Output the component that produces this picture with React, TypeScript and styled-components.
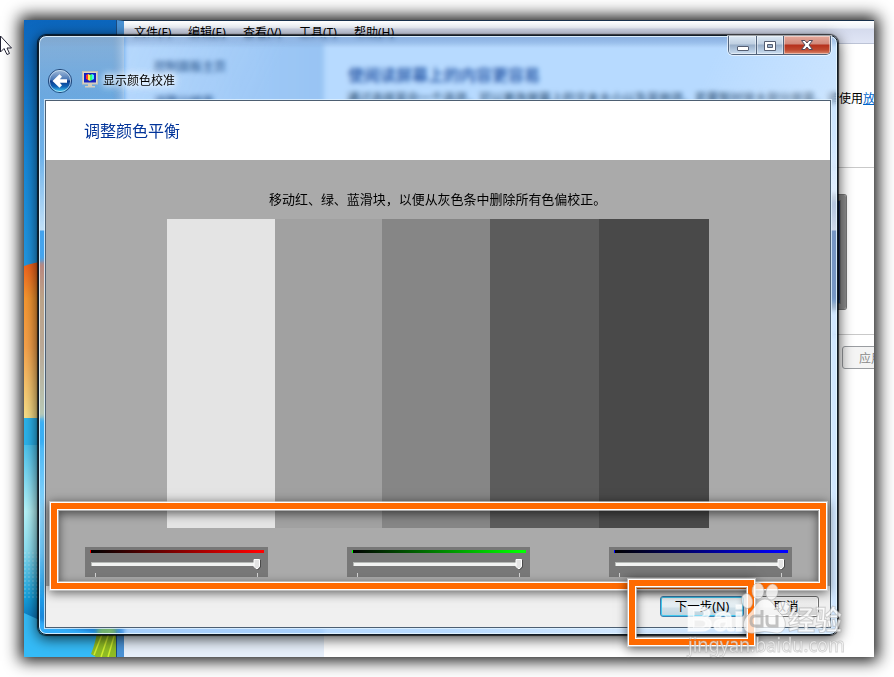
import React from "react";
import styled, { createGlobalStyle } from "styled-components";

const GlobalStyle = createGlobalStyle`
  *, *::before, *::after { box-sizing: border-box; }
  body {
    margin: 0;
    background: #fff;
    font-family: "Noto Sans", "Noto Sans CJK SC", sans-serif;
    font-size: 12px;
    color: #000;
  }
`;

const Page = styled.main`
  position: relative;
  width: 894px;
  height: 677px;
  padding: 20px 20px 20px 24px;
  overflow: hidden;
  background: #fff;
`;

const Desktop = styled.section`
  position: relative;
  display: flex;
  width: 850px;
  height: 637px;
  overflow: hidden;
  background: #1a86d4;
`;

const DesktopShadow = styled.div`
  width: 850px;
  height: 637px;
  box-shadow: 0 0 15px 4px rgba(0, 0, 0, 0.92);
`;

const Wallpaper = styled.svg`
  flex: none;
  width: 93px;
  height: 637px;
`;

const Explorer = styled.div`
  flex: none;
  display: flex;
  flex-direction: column;
  width: 757px;
  border-top: 1px solid #17304c;
  border-left: 7px solid #4a92d5;
  background: #fff;
  box-shadow: inset 1px 0 #132c48, -1px 0 #1d4c80;
`;

const MenuBar = styled.nav`
  display: flex;
  flex: none;
  height: 23px;
  padding: 3px 0 0 10px;
  border-bottom: 1px solid #bcc3d6;
  background: linear-gradient(#fff 0, #edf1f8 7px, #d5dbed 8px, #e1e6f6 23px);
  line-height: 18px;
`;

const MenuItem = styled.span<{ $width: number }>`
  flex: none;
  width: ${(p) => p.$width}px;
  white-space: nowrap;
`;

const ExplorerBody = styled.div`
  display: flex;
  flex: 1;
`;

const SidePane = styled.aside`
  flex: none;
  display: flex;
  flex-direction: column;
  gap: 17px;
  width: 200px;
  padding: 14px 0 0 30px;
  background: linear-gradient(90deg, #e9f1fb, #d0dded 200px) top / 200px 100px no-repeat, #e6effa;
  line-height: 18px;
  font-weight: 500;
  color: #1b2f50;
`;

const ExplorerContent = styled.div`
  flex: none;
  width: 560px;
  padding: 20px 0 0 24px;
  white-space: nowrap;
`;

const ExplorerTitle = styled.h2`
  margin: 0;
  font-size: 16px;
  font-weight: 500;
  line-height: 22px;
  color: #10296e;
`;

const ExplorerText = styled.p`
  margin: 4px 0 0 -1px;
  line-height: 18px;

  a {
    color: #06c;
    text-decoration: underline;
  }
`;

const Divider = styled.hr`
  height: 1px;
  margin: 59px 0 27px -24px;
  border: 0;
  background: #c9c9c9;
`;

const MonitorPreview = styled.div`
  width: 130px;
  height: 114px;
  margin-left: 368px;
  border: 5px solid #8e8e8e;
  border-radius: 2px;
  background: linear-gradient(#263d72 0 100px, #315b91 100px);
  box-shadow: inset 0 0 0 1px #777, 0 0 0 1px #777;
`;

const PreviewDivider = styled(Divider)`
  margin: 25px 0 11px -24px;
`;

const ApplyButton = styled.button`
  display: block;
  width: 75px;
  height: 23px;
  margin-left: 494px;
  padding: 0 0 0 16px;
  border: 1px solid #9a9da1;
  border-radius: 3px;
  background: #f4f4f4;
  color: #8a8a8a;
  font: inherit;
  text-align: left;
`;

const Dialog = styled.section`
  position: absolute;
  left: 14px;
  top: 15px;
  display: flex;
  flex-direction: column;
  width: 800px;
  height: 600px;
  padding: 0 6px 6px;
  border: 1px solid #101c28;
  border-radius: 8px;
  background: linear-gradient(
        rgba(225, 220, 215, 0.45),
        rgba(225, 220, 215, 0.28) 60px,
        rgba(215, 225, 235, 0.3) 120px,
        rgba(235, 243, 250, 0.75) 194px,
        rgba(235, 243, 250, 0) 195px
      )
      left top / 85px 600px no-repeat,
    linear-gradient(
        rgba(240, 244, 250, 0) 100px,
        rgba(240, 244, 250, 0.7) 194px,
        rgba(240, 244, 250, 0) 195px
      )
      right top / 8px 600px no-repeat,
    linear-gradient(rgba(0, 30, 70, 0.14), rgba(0, 30, 70, 0) 12px),
    linear-gradient(
      115deg,
      rgba(255, 255, 255, 0.15) 0 90px,
      rgba(160, 200, 240, 0) 230px 620px,
      rgba(255, 255, 255, 0.36) 780px
    ),
    rgba(49, 149, 255, 0.35);
  backdrop-filter: blur(2.4px);
  box-shadow: inset 0 0 0 1px rgba(232, 247, 255, 0.85), 0 0 1px 1px rgba(0, 0, 0, 0.7),
    0 3px 14px 1px rgba(0, 0, 0, 0.72);
`;

const TitleBar = styled.header`
  position: relative;
  display: flex;
  flex: none;
  align-items: center;
  height: 64px;
  padding: 25px 0 0 2px;
`;

const BackIcon = styled.svg`
  width: 26px;
  height: 26px;
  margin-right: 9px;
`;

const MonitorIcon = styled.svg`
  width: 16px;
  height: 17px;
  margin: 0 5px 2px 0;
`;

const TitleText = styled.span`
  line-height: 18px;
  text-shadow: 0 0 6px #fff, 0 0 8px #fff, 0 0 10px rgba(255, 255, 255, 0.8);
`;

const CaptionButtons = styled.div`
  position: absolute;
  right: 0;
  top: 0;
  display: flex;
  height: 19px;
  border: 1px solid #52647c;
  border-top: 0;
  border-radius: 0 0 5px 5px;
  box-shadow: 0 0 0 1px rgba(255, 255, 255, 0.6);
  overflow: hidden;
`;

const CaptionButton = styled.button<{ $width: number; $close?: boolean }>`
  display: grid;
  place-items: center;
  width: ${(p) => p.$width}px;
  padding: 0;
  border: 0;
  border-right: ${(p) => (p.$close ? "0" : "1px solid #52647c")};
  background: ${(p) =>
    p.$close
      ? "linear-gradient(#e6a99b 0, #d1887a 8px, #b6301c 9px, #c04a30 14px, #dc8a70 18px)"
      : "linear-gradient(#dce9f5 0, #bfcfe1 8px, #98aec8 9px, #b3c8df 14px, #cfe0f2 18px)"};
  box-shadow: inset 0 0 0 1px rgba(255, 255, 255, 0.42);
`;

const Client = styled.div`
  display: flex;
  flex: 1;
  flex-direction: column;
  border: 1px solid #4d5f72;
  background: #aaa;
  box-shadow: 0 0 0 1px rgba(225, 242, 255, 0.8);
`;

const Heading = styled.h1`
  flex: none;
  height: 59px;
  margin: 0;
  padding: 18px 0 0 38px;
  background: #fff;
  color: #003399;
  font-size: 16px;
  font-weight: 400;
  line-height: 24px;
`;

const Calibration = styled.div`
  display: flex;
  flex: none;
  flex-direction: column;
  height: 426px;
`;

const Instruction = styled.p`
  margin: 28px 0 9px 223px;
  font-size: 12.97px;
  line-height: 22px;
  white-space: nowrap;
`;

const GrayBars = styled.div`
  display: grid;
  grid-template-columns: 108px 107px 108px 109px 110px;
  flex: none;
  height: 309px;
  margin-left: 121px;
`;

const GrayBar = styled.div<{ $tone: string }>`
  background: ${(p) => p.$tone};
`;

const Sliders = styled.div`
  display: flex;
  gap: 79px;
  margin: 19px 0 0 39px;
`;

const Slider = styled.div`
  display: flex;
  flex-direction: column;
  width: 183px;
  height: 30px;
  padding: 3px 4px 0 5px;
  background: #787878;
`;

const ColorRamp = styled.div<{ $color: string }>`
  flex: none;
  width: 174px;
  height: 3px;
  border-left: 1px solid ${(p) => p.$color};
  background: linear-gradient(90deg, #000, ${(p) => p.$color} 97%);
`;

const TrackSvg = styled.svg`
  width: 174px;
  height: 24px;
`;

const Footer = styled.footer`
  display: flex;
  flex: 1;
  gap: 9px;
  align-items: flex-start;
  padding: 10px 11px 0 614px;
  background: #f0f0f0;
`;

const DialogButton = styled.button<{ $primary?: boolean; $width: number }>`
  flex: none;
  width: ${(p) => p.$width}px;
  height: 21px;
  padding: 0;
  border: 1px solid ${(p) => (p.$primary ? "#3c7fb1" : "#707070")};
  border-radius: 3px;
  background: ${(p) =>
    p.$primary
      ? "linear-gradient(#eef4f7 0, #e2edf2 10px, #cfdfe8 11px, #bdd3df)"
      : "linear-gradient(#f2f2f2 0, #ebebeb 10px, #dcdcdc 11px, #cfcfcf)"};
  box-shadow: inset 0 0 0 1px ${(p) => (p.$primary ? "#41c9ee" : "#fcfcfc")};
  font: inherit;
  font-size: 12.5px;
  line-height: 18px;
`;

type Box = { $x: number; $y: number; $w: number; $h: number };

const HighlightShadow = styled.div<Box>`
  position: absolute;
  left: ${(p) => p.$x}px;
  top: ${(p) => p.$y}px;
  width: ${(p) => p.$w}px;
  height: ${(p) => p.$h}px;
  box-shadow: 0 0 0 1px rgba(220, 220, 220, 0.6), 0 2px 10px 1px rgba(0, 0, 0, 0.6);
`;

const HighlightFrame = styled.div<Box>`
  position: absolute;
  left: ${(p) => p.$x}px;
  top: ${(p) => p.$y}px;
  display: flex;
  width: ${(p) => p.$w}px;
  height: ${(p) => p.$h}px;
  border: 1px solid #fff;

  &::before {
    content: "";
    flex: 1;
    border: 6px solid #ff6a00;
    box-shadow: inset 0 0 0 1px #fff, inset 0 0 0 2px rgba(205, 205, 205, 0.7),
      inset 0 3px 10px 2px rgba(0, 0, 0, 0.55);
  }
`;

const Watermark = styled.svg`
  position: absolute;
  left: 680px;
  top: 575px;
  width: 175px;
  height: 90px;
`;

const Cursor = styled.svg`
  position: absolute;
  left: 0;
  top: 35px;
  width: 14px;
  height: 22px;
`;

const menus: [string, number][] = [
  ["文件(F)", 54],
  ["编辑(E)", 55],
  ["查看(V)", 56],
  ["工具(T)", 55],
  ["帮助(H)", 55],
];

const tones = ["#e4e4e4", "#a1a1a1", "#868686", "#5c5c5c", "#494949"];
const channels = ["#ff0000", "#00ff00", "#0000ff"];
const frames: [number, number, number, number][] = [
  [50, 502, 777, 88],
  [628, 579, 127, 67],
];

function WallpaperArt() {
  return (
    <Wallpaper viewBox="0 0 93 637">
      <defs>
        <linearGradient id="sky" x2="0" y2="1">
          <stop offset="0" stopColor="#0c66bd" />
          <stop offset=".22" stopColor="#1788d8" />
          <stop offset=".4" stopColor="#2298e2" />
          <stop offset=".62" stopColor="#31aeea" />
        </linearGradient>
        <linearGradient id="flag" x2="0" y2="1">
          <stop offset="0" stopColor="#f15a18" />
          <stop offset=".25" stopColor="#f79831" />
          <stop offset=".55" stopColor="#f9a34b" />
          <stop offset="1" stopColor="#f9e189" />
        </linearGradient>
        <linearGradient id="glow" x2="0" y2="1">
          <stop offset="0" stopColor="#4bc4f0" />
          <stop offset=".35" stopColor="#b7f6fb" />
          <stop offset=".55" stopColor="#8fe2f4" />
          <stop offset=".8" stopColor="#15a3e0" />
          <stop offset="1" stopColor="#075fae" />
        </linearGradient>
        <pattern id="dots" width="4" height="4" patternUnits="userSpaceOnUse">
          <circle cx="1" cy="1" r=".8" fill="#fff" opacity=".35" />
        </pattern>
      </defs>
      <rect width="93" height="637" fill="url(#sky)" />
      <path d="M0 246Q30 236 93 240V398H0Z" fill="url(#flag)" />
      <rect y="398" width="93" height="28" fill="#2cb4ed" />
      <rect y="425" width="93" height="190" fill="url(#glow)" />
      <rect y="530" width="93" height="50" fill="url(#dots)" />
      <path d="M0 593L20 602L93 617V637H0Z" fill="#35bbf7" />
      <path d="M74 606Q72 622 67 634L72 637H93V600Z" fill="#8fbc24" />
      <path d="M77 637L86 610M84 637L91 613M70 635L79 612" stroke="#d1ef31" strokeWidth="1.5" />
    </Wallpaper>
  );
}

function SliderTrack() {
  return (
    <TrackSvg viewBox="0 0 174 24">
      <path d="M1 9.5H164" stroke="#b6b9b6" />
      <path d="M1.5 9V13" stroke="#b6b9b6" />
      <rect x="2" y="10" width="162" height="3" fill="#f2f3f2" />
      <path d="M164 6.5H169.5V13.5L168 15.5H166L164 13.5Z" fill="#e4e4e4" stroke="#fff" />
      <path d="M170.5 7V14L167.5 17" fill="none" stroke="#4a4a4a" />
      <path d="M5.5 20V24M167.5 20V24" stroke="#d2d2d2" />
    </TrackSvg>
  );
}

export default function App() {
  return (
    <>
      <GlobalStyle />
      <Page>
        <DesktopShadow>
          <Desktop>
            <WallpaperArt />
            <Explorer>
              <MenuBar>
                {menus.map(([label, width]) => (
                  <MenuItem key={label} $width={width}>{label}</MenuItem>
                ))}
              </MenuBar>
              <ExplorerBody>
                <SidePane>
                  <span>控制面板主页</span>
                  <span>调整分辨率</span>
                </SidePane>
                <ExplorerContent>
                  <ExplorerTitle>使阅读屏幕上的内容更容易</ExplorerTitle>
                  <ExplorerText>
                    通过选择其中一个选项，可以更改屏幕上的文本大小以及其他项。若要暂时放大部分屏幕，请使用<a>放大镜</a>
                  </ExplorerText>
                  <Divider />
                  <MonitorPreview />
                  <PreviewDivider />
                  <ApplyButton>应用</ApplyButton>
                </ExplorerContent>
              </ExplorerBody>
            </Explorer>
            <Dialog>
              <TitleBar>
                <BackIcon viewBox="0 0 26 26">
                  <defs>
                    <linearGradient id="orb" x2="0" y2="1">
                      <stop offset="0" stopColor="#a8c0dc" />
                      <stop offset=".45" stopColor="#4574b4" />
                      <stop offset=".5" stopColor="#0a3a8c" />
                      <stop offset=".75" stopColor="#1166b8" />
                      <stop offset="1" stopColor="#4fe0ff" />
                    </linearGradient>
                  </defs>
                  <circle cx="13" cy="13" r="11.6" fill="url(#orb)" stroke="#244a7c" />
                  <circle cx="13" cy="13" r="10.6" fill="none" stroke="#cfe6f8" strokeOpacity=".7" />
                  <path d="M5.5 13L12.5 6.3L15 8.7L12.8 11.2H20V14.8H12.8L15 17.3L12.5 19.7Z" fill="#fff" />
                </BackIcon>
                <MonitorIcon viewBox="0 0 16 17">
                  <rect x=".5" y=".5" width="15" height="12.5" fill="#ddd8c8" stroke="#c4c1b4" />
                  <rect x="2" y="2" width="12" height="9.5" fill="#1420bd" />
                  <path d="M4 4L6 3V9L4 8Z" fill="#f33" />
                  <path d="M6 3L8 4V10L6 9Z" fill="#fe4" />
                  <path d="M8 4L10 3V9L8 10Z" fill="#3f7" />
                  <path d="M10 3L12 4V8L10 9Z" fill="#4ef" />
                  <path d="M6 13H10V15H13V16.5H3V15H6Z" fill="#d2cdbd" />
                </MonitorIcon>
                <TitleText>显示颜色校准</TitleText>
                <CaptionButtons>
                  <CaptionButton $width={28} aria-label="最小化">
                    <svg width="14" height="16"><rect x="1.5" y="9.5" width="11" height="4" rx=".5" fill="#fff" stroke="#555e72" /></svg>
                  </CaptionButton>
                  <CaptionButton $width={27} aria-label="最大化">
                    <svg width="14" height="16"><path d="M1.5 4.5H12.5V13.5H1.5ZM4.5 7.5V10.5H9.5V7.5Z" fill="#fff" fillRule="evenodd" stroke="#555e72" /></svg>
                  </CaptionButton>
                  <CaptionButton $width={46} $close aria-label="关闭">
                    <svg width="14" height="14"><path d="M1.5 2.5H5L7 5L9 2.5H12.5L9 7L12.5 11.5H9L7 9L5 11.5H1.5L5 7Z" fill="#fff" stroke="#514a5c" /></svg>
                  </CaptionButton>
                </CaptionButtons>
              </TitleBar>
              <Client>
                <Heading>调整颜色平衡</Heading>
                <Calibration>
                  <Instruction>移动红、绿、蓝滑块，以便从灰色条中删除所有色偏校正。</Instruction>
                  <GrayBars>
                    {tones.map((tone) => <GrayBar key={tone} $tone={tone} />)}
                  </GrayBars>
                  <Sliders>
                    {channels.map((color) => (
                      <Slider key={color}>
                        <ColorRamp $color={color} />
                        <SliderTrack />
                      </Slider>
                    ))}
                  </Sliders>
                </Calibration>
                <Footer>
                  <DialogButton $width={84} $primary>下一步(N)</DialogButton>
                  <DialogButton $width={66}>取消</DialogButton>
                </Footer>
              </Client>
            </Dialog>
          </Desktop>
        </DesktopShadow>
        {frames.map(([x, y, w, h]) => (
          <React.Fragment key={x}>
            <HighlightShadow $x={x} $y={y} $w={w} $h={h} />
            <HighlightFrame $x={x} $y={y} $w={w} $h={h} />
          </React.Fragment>
        ))}
        <Watermark viewBox="0 0 175 90">
          <g fill="#fff" fillOpacity=".75" stroke="#a5a5a5" strokeOpacity=".5" strokeWidth="1">
            <text x="6" y="56" textLength="58" lengthAdjust="spacingAndGlyphs" fontFamily="Liberation Sans" fontWeight="700" fontSize="35" stroke="#fff" strokeOpacity=".6" strokeWidth="1.6">Bai</text>
            <text x="108" y="55" textLength="54" lengthAdjust="spacingAndGlyphs" fontFamily="Noto Sans CJK SC" fontWeight="700" fontSize="27">经验</text>
            <text x="8" y="77" textLength="157" lengthAdjust="spacingAndGlyphs" fontFamily="Noto Sans" fontSize="19" strokeOpacity=".45">jingyan.baidu.com</text>
            <ellipse cx="67" cy="26" rx="5.5" ry="7.5" transform="rotate(-12 67 26)" />
            <ellipse cx="78" cy="16" rx="6" ry="8" />
            <ellipse cx="92" cy="17" rx="6" ry="8" transform="rotate(12 92 17)" />
            <ellipse cx="103" cy="33" rx="7" ry="6.5" />
            <path d="M85 24C93 24 94 33 101 39C109 48 105 59 96 58Q84 55 74 58C63 60 60 48 68 40C75 34 77 24 85 24Z" />
          </g>
          <path
            d="M82 35V51H75Q71 51 71 46Q71 41 75 41H82M87 40V47Q87 51 91 51H97V40"
            fill="none"
            stroke="#a3a3a3"
            strokeOpacity=".65"
            strokeWidth="3"
          />
        </Watermark>
        <Cursor viewBox="0 0 14 22">
          <path d="M.5 1V17L4 13.5L7 19.5L9.5 18.5L7 13H11.5Z" fill="#fff" stroke="#223" />
        </Cursor>
      </Page>
    </>
  );
}
